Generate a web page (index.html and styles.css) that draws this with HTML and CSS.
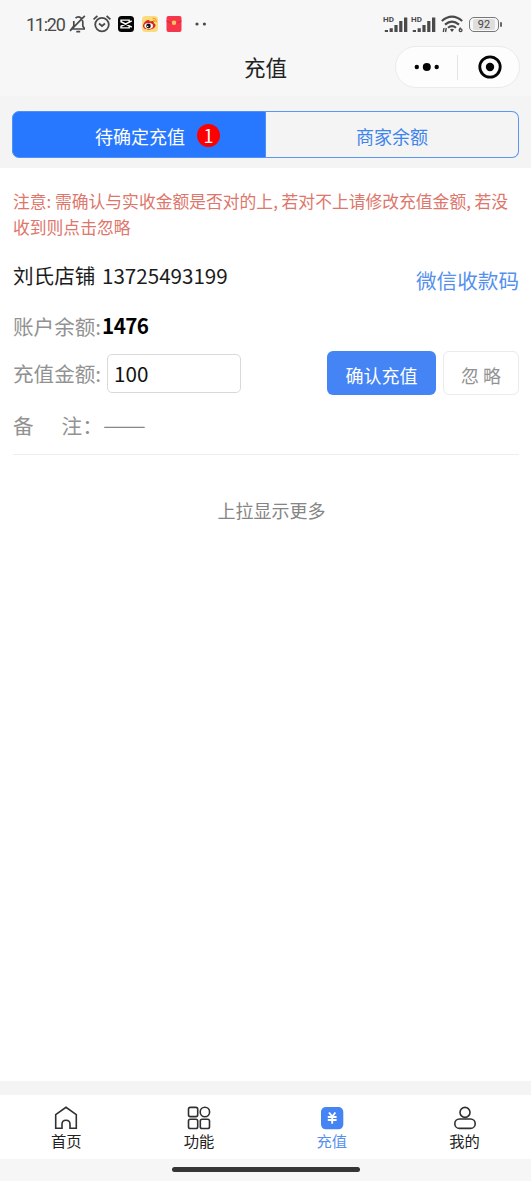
FILE: index.html
```html
<!DOCTYPE html>
<html lang="zh-CN">
<head>
<meta charset="utf-8">
<title>充值</title>
<link rel="stylesheet" href="styles.css">
</head>
<body>
<div class="app">
  <header class="header">
    <div class="status">
      <div class="status-left">
        <span class="time">11:20</span>
        <svg class="bell" width="18" height="18" viewBox="0 0 18 18" fill="none" stroke="#4a4a4a" stroke-width="1.7"><path d="M4.8 6V11L2.6 14H16M6.5 3.2Q9 .8 12 3Q13.8 4.5 13.8 7V11L15.5 13.8M7.3 16.6H11.2M15.8 .8L1 15.8"/></svg>
        <svg class="alarm" width="18" height="18" viewBox="0 0 18 18" fill="none" stroke="#4a4a4a" stroke-width="1.8"><circle cx="9" cy="9.6" r="6.8"/><path d="M.5 4.4L4.4 1M17.5 4.4L13.6 1M6 8.5L9 11L12 8.5"/></svg>
        <svg class="capcut" width="16" height="16" viewBox="0 0 16 16"><rect width="16" height="16" rx="3.5" fill="#050505"/><path d="M13.8 4.9L3 10.3V11.9H11.2V10.4M13.8 11.1L3 5.7V4.1H11.2V5.6" fill="none" stroke="#fff" stroke-width="1.4"/></svg>
        <svg class="weibo" width="16" height="16" viewBox="0 0 16 16"><rect width="16" height="16" rx="3.5" fill="#fbdc7c"/><path d="M1 10C1 7 5 3 7 4.2C8 4.5 7.5 5.5 8 5.6C10 4.7 12.3 4.8 11.8 7.2C14 7.8 14 10 12.5 11.5C9 15 1 14 1 10Z" fill="#d9271c"/><ellipse cx="6.7" cy="9.9" rx="4.3" ry="2.8" fill="#fff"/><circle cx="6.5" cy="9.9" r="2.3" fill="#161616"/><circle cx="5.7" cy="10.4" r=".7" fill="#fff"/><path d="M10.5 2.2Q14.6 2 14.2 6.4M10.8 4.2Q12.6 4.2 12.4 6" fill="none" stroke="#f19b2c" stroke-width="1.1"/></svg>
        <svg class="packet" width="16" height="16" viewBox="0 0 16 16"><rect x=".5" width="15" height="16" rx="2" fill="#f5364b"/><path d="M.5 5Q8 9.5 15.5 5" fill="none" stroke="#d92640"/><circle cx="8" cy="6.8" r="2.3" fill="#fac45c"/></svg>
        <svg class="dots" width="12" height="4" viewBox="0 0 12 4" fill="#4a4a4a"><circle cx="2" cy="2" r="1.6"/><circle cx="9.4" cy="2" r="1.6"/></svg>
      </div>
      <div class="status-right">
        <div class="signal"><span class="hd">HD</span><svg width="24" height="17" viewBox="0 0 24 17" fill="#4a4a4a"><path d="M.8 14H4V16H.8ZM5.6 12.2H8.8V16H5.6ZM10.4 9H13.6V16H10.4ZM15.2 5H18.4V16H15.2ZM20 1.6H23.3V16H20Z"/></svg></div>
        <div class="signal"><span class="hd">HD</span><svg width="24" height="17" viewBox="0 0 24 17" fill="#4a4a4a"><path d="M.8 14H4V16H.8ZM5.6 12.2H8.8V16H5.6ZM10.4 9H13.6V16H10.4ZM15.2 5H18.4V16H15.2ZM20 1.6H23.3V16H20Z"/></svg></div>
        <svg class="wifi" width="22" height="18" viewBox="0 0 22 18" fill="none" stroke="#4a4a4a" stroke-width="2.1"><path d="M.8 6Q11-2.6 21.2 6M4 9.6Q11 3.7 18 9.6M7 12.8Q11 9.5 15 12.8"/><path d="M9 14.4Q11 13 13 14.4L11 17Z" fill="#4a4a4a" stroke="none"/><path d="M2.3 17L3 13M4.5 17L5.3 13M19.5 12.4L18.4 15" stroke-width="1.4"/><circle cx="19.6" cy="15.2" r="1.4" stroke-width="1.3"/></svg>
        <div class="battery"><span class="level">92</span></div>
      </div>
    </div>
    <div class="titlebar">
      <h1 class="title">充值</h1>
      <div class="capsule">
        <svg class="menu-dots" width="26" height="10" viewBox="0 0 26 10" fill="#050505"><circle cx="2.8" cy="5" r="2.2"/><circle cx="12.8" cy="5" r="4"/><circle cx="22.7" cy="5" r="2.2"/></svg>
        <span class="capsule-line"></span>
        <svg width="24" height="24" viewBox="0 0 24 24"><circle cx="12" cy="12" r="10.2" fill="none" stroke="#050505" stroke-width="2.8"/><circle cx="12" cy="12" r="4.2" fill="#050505"/></svg>
      </div>
    </div>
  </header>

  <nav class="segments">
    <div class="segment active"><span>待确定充值</span><span class="badge">1</span></div>
    <div class="segment"><span>商家余额</span></div>
  </nav>

  <main class="content">
    <p class="notice">注意: 需确认与实收金额是否对的上, 若对不上请修改充值金额, 若没收到则点击忽略</p>
    <section class="record">
      <div class="row shop"><span class="name">刘氏店铺 <span class="phone">13725493199</span></span><a class="paycode">微信收款码</a></div>
      <div class="row balance"><span class="label">账户余额:</span><strong>1476</strong></div>
      <div class="row amount">
        <span class="label">充值金额:</span>
        <input class="field" type="text" value="100">
        <button class="btn confirm">确认充值</button>
        <button class="btn ignore">忽 略</button>
      </div>
      <div class="row remark"><span class="label">备</span><span class="label">注：</span><span class="dash">——</span></div>
    </section>
    <p class="more">上拉显示更多</p>
  </main>

  <footer class="footer">
    <nav class="tabs">
      <div class="tab"><svg width="24" height="24" viewBox="0 0 24 24" fill="none" stroke="#303030" stroke-width="1.6"><path d="M1.7 8.6L12 1.3L22.3 8.6V22.3H16V18.2Q16 14.2 12 14.2Q8 14.2 8 18.2V22.3H1.7Z"/></svg><span>首页</span></div>
      <div class="tab"><svg width="24" height="24" viewBox="0 0 24 24" fill="none" stroke="#303030" stroke-width="1.6"><rect x="1.5" y="1.4" width="9.2" height="9.2" rx="1.8"/><circle cx="17.9" cy="6" r="4.7"/><rect x="1.5" y="13.3" width="9.2" height="9.2" rx="1.8"/><rect x="13.3" y="13.3" width="9.2" height="9.2" rx="1.8"/></svg><span>功能</span></div>
      <div class="tab current"><svg width="24" height="24" viewBox="0 0 24 24"><rect x="1" y="1" width="22.3" height="22.3" rx="4.8" fill="#4484f4"/><path d="M9 6.5L12.2 10.5L15.4 6.5M12.2 10V17.8M7.8 11H16.6M7.8 14H16.6" fill="none" stroke="#fff" stroke-width="1.9"/></svg><span>充值</span></div>
      <div class="tab"><svg width="24" height="24" viewBox="0 0 24 24" fill="none" stroke="#303030" stroke-width="1.6"><circle cx="12" cy="6.4" r="5"/><rect x="1.8" y="13" width="20.4" height="9.4" rx="4.7"/></svg><span>我的</span></div>
    </nav>
    <div class="home-area"><span class="home-bar"></span></div>
  </footer>
</div>
</body>
</html>
```
FILE: styles.css
```css
* { box-sizing: border-box; }
body {
  margin: 0;
  font-family: "Noto Sans CJK SC", sans-serif;
  color: #1c1c1c;
  background: #fff;
}
h1, p { margin: 0; font-weight: 400; }
svg { display: block; flex: none; }
.app { width: 531px; height: 1181px; display: flex; flex-direction: column; overflow: hidden; }

.header { height: 96px; background: #f7f7f7; flex: none; }
.status { height: 46px; padding: 0 32px 0 26px; display: flex; justify-content: space-between; }
.status-left, .status-right { display: flex; align-items: center; height: 48px; }
.time { width: 39px; font: 18px/24px Roboto, sans-serif; letter-spacing: -1.25px; color: #4a4a4a; white-space: nowrap; margin-top: 2px; }
.bell { margin-left: 4px; }
.alarm { margin-left: 6px; }
.capcut { margin-left: 7px; }
.weibo, .packet { margin-left: 8px; }
.dots { margin-left: 13px; }
.signal { position: relative; width: 24px; margin-right: 4px; }
.hd { position: absolute; left: -1px; top: 0; font: 700 8px/7px Roboto, sans-serif; color: #4a4a4a; }
.wifi { margin-left: 1px; }
.battery { position: relative; width: 30px; height: 15px; margin-left: 6px; padding: 1px; border: 1.5px solid #777; border-radius: 5px; }
.battery::after { content: ""; position: absolute; right: -4px; top: 4px; width: 2px; height: 5px; border-radius: 1px; background: #666; }
.level { display: block; width: 22px; height: 11px; margin: 0 auto; background: #dedede; border-radius: 2px; font: 11px/11px Roboto, sans-serif; text-align: center; color: #444; }
.titlebar { height: 42px; padding: 0 11px 0 244px; display: flex; justify-content: space-between; align-items: center; }
.title { font-size: 21.5px; line-height: 28px; color: #222; margin-top: -1px; }
.capsule { width: 125px; height: 42px; padding: 0 17px 0 18px; display: flex; align-items: center; background: #fdfdfd; border: 1px solid #ebebeb; border-radius: 21px; }
.capsule-line { width: 1px; height: 25px; background: #e4e4e4; margin: 0 auto 0 17px; }

.segments { height: 72px; padding: 15px 12px 10px 12px; display: grid; grid-template-columns: 254px 1fr; background: #f4f4f4; flex: none; }
.segment { display: flex; align-items: center; justify-content: center; border: 1.5px solid #5a97ee; border-left: 0; border-radius: 0 7px 7px 0; font-size: 18px; line-height: 26px; padding-top: 2px; color: #3e84ed; }
.segment.active { background: #2878ff; color: #fff; border: 1px solid #4e90f5; border-radius: 7px 0 0 7px; padding-left: 82px; padding-right: 45px; justify-content: space-between; }
.badge { width: 23px; height: 23px; margin-top: -1px; border-radius: 50%; background: #f00; text-align: center; font-size: 18px; line-height: 23px; }

.content { flex: 1; padding: 20px 12px 0 13px; background: #fff; }
.notice { font-size: 16.8px; line-height: 26px; color: #dd766b; width: 505px; }
.record { border-bottom: 1.5px solid #eee; height: 215px; font-size: 20.6px; line-height: 30px; }
.row { display: flex; align-items: center; white-space: nowrap; }
.label { color: #929292; margin-top: -1px; }
.shop { height: 70px; justify-content: space-between; }
.phone { margin-left: 2px; }
.paycode { color: #5590ed; margin-top: 9px; }
.balance { height: 32px; }
.balance strong { color: #000; font-weight: 700; letter-spacing: -.6px; margin: -2px 0 0 1px; }
.amount { height: 62px; }
.field { width: 134px; height: 39px; margin-left: 6px; margin-right: auto; padding: 0 6px; font: inherit; color: #111; border: 1px solid #d9d9d9; border-radius: 5px; background: #fff; }
.btn { height: 44px; padding: 4px 0 0; font-family: inherit; font-size: 18px; border-radius: 6px; }
.confirm { width: 109px; border: 0; background: #4484f4; color: #fff; }
.ignore { width: 76px; margin-left: 7px; border: 1.5px solid #ebebeb; background: #fff; color: #929292; }
.remark { height: 42px; }
.remark .label + .label { margin-left: 28px; }
.dash { font-size: 20.6px; color: #888; display: inline-block; transform: scaleX(1.24); transform-origin: left center; margin-top: -3px; }
.more { margin-top: 41px; padding-left: 11px; text-align: center; font-size: 18px; line-height: 28px; color: #858585; }

.footer { flex: none; height: 100px; border-top: 14px solid #f4f4f4; }
.tabs { height: 64px; display: grid; grid-template-columns: repeat(4, 1fr); background: #fff; }
.tab { display: flex; flex-direction: column; align-items: center; padding-top: 11px; font-size: 15.3px; line-height: 21px; color: #222; }
.current { color: #5790ee; }
.home-area { height: 22px; padding-top: 8px; background: #f6f6f6; }
.home-bar { display: block; width: 188px; height: 5px; margin: 0 auto; border-radius: 3px; background: #353535; }
```
